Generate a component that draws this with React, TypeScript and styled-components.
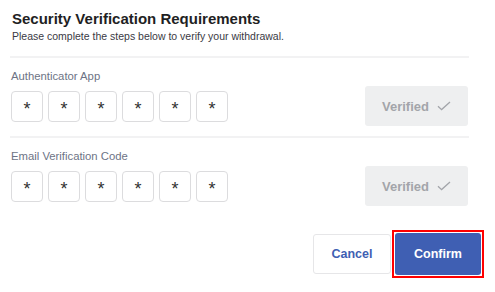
import React from "react";
import styled, { createGlobalStyle } from "styled-components";

const Global = createGlobalStyle`
  html, body { margin: 0; padding: 0; background: #ffffff; }
  body { font-family: "Liberation Sans", Arial, sans-serif; color: #222; }
`;

const Page = styled.div`
  width: 495px;
  height: 292px;
  box-sizing: border-box;
  padding: 10px 26px 0 10px;
`;

const Header = styled.div`
  padding: 0 0 13px 2px;
`;

const Title = styled.h1`
  margin: 0;
  font-size: 15px;
  line-height: 18px;
  font-weight: 700;
  color: #1f1f24;
`;

const Subtitle = styled.p`
  margin: 1px 0 0;
  font-size: 10.5px;
  line-height: 14px;
  color: #3a3a44;
`;

const Section = styled.section<{ $last?: boolean }>`
  border-top: 2px solid #f2f2f3;
  padding: 11px 0 ${(p) => (p.$last ? "0" : "10px")} 1px;
`;

const Label = styled.div`
  font-size: 11.3px;
  line-height: 14px;
  color: #6d7385;
  margin-bottom: 3px;
`;

const Row = styled.div`
  display: flex;
  align-items: center;
  justify-content: space-between;
`;

const Digits = styled.div`
  display: flex;
  gap: 5px;
`;

const Digit = styled.div`
  width: 32px;
  height: 31px;
  box-sizing: border-box;
  border: 1px solid #dcdcde;
  border-radius: 4px;
  display: flex;
  align-items: center;
  justify-content: center;
  font-size: 18px;
  color: #333;
  padding-top: 6px;
`;

const VerifiedButton = styled.div`
  width: 103px;
  height: 40px;
  border-radius: 3px;
  background: #eeeff0;
  display: flex;
  align-items: center;
  justify-content: center;
  gap: 8px;
  font-size: 13px;
  font-weight: 700;
  color: #a3a5aa;
  margin-right: 1px;
`;

const Footer = styled.div`
  display: flex;
  justify-content: flex-end;
  align-items: center;
  gap: 1px;
  margin-top: 24px;
  margin-right: -15px;
`;

const CancelButton = styled.button`
  width: 78px;
  height: 40px;
  border: 1px solid #e6e6e8;
  border-radius: 3px;
  background: #fff;
  color: #3f5fb3;
  font-family: inherit;
  font-size: 12.5px;
  font-weight: 700;
  padding: 0;
`;

const ConfirmFrame = styled.div`
  border: 2px solid #ff0000;
  padding: 1px;
  display: flex;
`;

const ConfirmButton = styled.button`
  width: 86px;
  height: 42px;
  border: none;
  border-radius: 3px;
  background: #3f5fb3;
  color: #fff;
  font-family: inherit;
  font-size: 12.5px;
  font-weight: 700;
  padding: 0;
`;

const Check = () => (
  <svg width="14" height="10" viewBox="0 0 14 10" fill="none">
    <path d="M1 5.2 L4.6 8.6 L13 1" stroke="#a3a5aa" strokeWidth="1.3" />
  </svg>
);

const CodeRow = ({ label, last }: { label: string; last?: boolean }) => (
  <Section $last={last}>
    <Label>{label}</Label>
    <Row>
      <Digits>
        {Array.from({ length: 6 }).map((_, i) => (
          <Digit key={i}>*</Digit>
        ))}
      </Digits>
      <VerifiedButton>
        Verified <Check />
      </VerifiedButton>
    </Row>
  </Section>
);

export default function App() {
  return (
    <Page>
      <Global />
      <Header>
        <Title>Security Verification Requirements</Title>
        <Subtitle>Please complete the steps below to verify your withdrawal.</Subtitle>
      </Header>
      <CodeRow label="Authenticator App" />
      <CodeRow label="Email Verification Code" last />
      <Footer>
        <CancelButton>Cancel</CancelButton>
        <ConfirmFrame>
          <ConfirmButton>Confirm</ConfirmButton>
        </ConfirmFrame>
      </Footer>
    </Page>
  );
}
